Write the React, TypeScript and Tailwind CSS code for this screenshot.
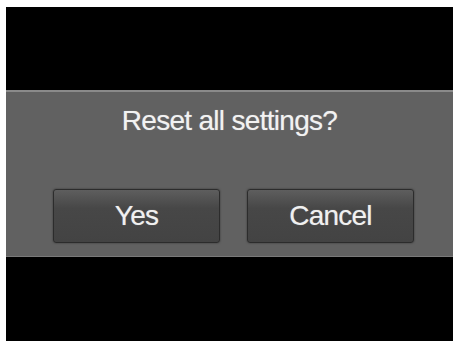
export default function App() {
  const font = { fontFamily: '"Liberation Sans", Arial, sans-serif' };

  return (
    <div className="w-[457px] h-[345px] bg-white pt-[7px] pl-[6px]" style={font}>
      <div className="w-[447px] h-[334px] bg-black flex flex-col">
        <div className="h-[83px]" />
        <div className="h-[167px] bg-[#616161] border-t-2 border-[#8a8a8a] border-b border-b-[#7a7a7a] flex flex-col">
          <div className="pt-[13px] text-center text-[28px] leading-[32px] tracking-[-0.7px] text-[#f2f2f2] [text-shadow:0_0_1px_rgba(255,255,255,0.45)]">
            Reset all settings?
          </div>
          <div className="mt-auto mb-[13px] pl-[47px] flex gap-[27px]">
            <DialogButton label="Yes" />
            <DialogButton label="Cancel" />
          </div>
        </div>
      </div>
    </div>
  );
}

function DialogButton({ label }: { label: string }) {
  return (
    <div className="w-[167px] h-[54px] rounded-[3px] border border-[#2c2c2c] shadow-[0_0_2px_rgba(0,0,0,0.5)] bg-gradient-to-b from-[#5e5e5e] via-[#474747] via-35% to-[#434343] flex items-center justify-center text-[28px] tracking-[-0.8px] text-[#f0f0f0] [text-shadow:0_0_1px_rgba(255,255,255,0.45)]">
      {label}
    </div>
  );
}
